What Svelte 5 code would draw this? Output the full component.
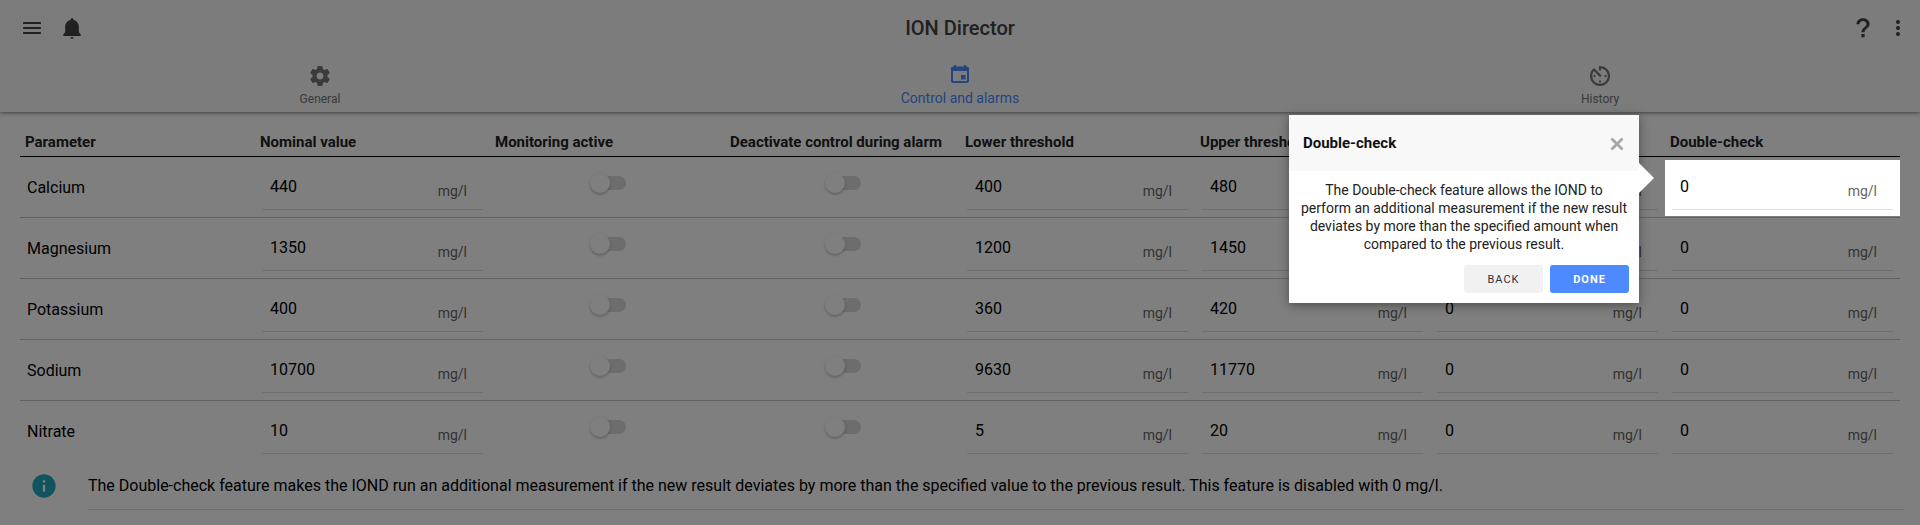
<script lang="ts">
  const columns = [
    'Parameter',
    'Nominal value',
    'Monitoring active',
    'Deactivate control during alarm',
    'Lower threshold',
    'Upper threshold',
    'Offset',
    'Double-check',
  ];

  let rows = $state([
    { name: 'Calcium', nominal: '440', monitoring: false, deactivate: false, lower: '400', upper: '480', offset: '0', check: '0' },
    { name: 'Magnesium', nominal: '1350', monitoring: false, deactivate: false, lower: '1200', upper: '1450', offset: '0', check: '0' },
    { name: 'Potassium', nominal: '400', monitoring: false, deactivate: false, lower: '360', upper: '420', offset: '0', check: '0' },
    { name: 'Sodium', nominal: '10700', monitoring: false, deactivate: false, lower: '9630', upper: '11770', offset: '0', check: '0' },
    { name: 'Nitrate', nominal: '10', monitoring: false, deactivate: false, lower: '5', upper: '20', offset: '0', check: '0' },
  ]);

  let tourOpen = $state(true);
  const closeTour = () => (tourOpen = false);
</script>

{#snippet field(row, key, label)}
  <div class="field">
    <input type="text" inputmode="numeric" aria-label="{row.name} {label}" bind:value={row[key]} />
    <span class="unit">mg/l</span>
  </div>
{/snippet}

{#snippet toggle(row, key, label)}
  <input type="checkbox" class="toggle" aria-label="{row.name} {label}" bind:checked={row[key]} />
{/snippet}

<header class="header">
  <div class="toolbar">
    <div class="actions">
      <button class="icon-button" aria-label="Menu">
        <svg viewBox="0 0 24 24">
          <rect x="3" y="6" width="18" height="2" rx=".6" />
          <rect x="3" y="11" width="18" height="2" rx=".6" />
          <rect x="3" y="16" width="18" height="2" rx=".6" />
        </svg>
      </button>
      <button class="icon-button" aria-label="Notifications">
        <svg viewBox="0 0 24 24">
          <path d="M12 2.200c-.9 0-1.500.6-1.500 1.400v.5C7.500 4.800 5.200 7.300 5.200 10.500v5.800L3.300 18.400V20h17.400v-1.600l-1.900-2.100v-5.800c0-3.200-2.300-5.700-5.300-6.400v-.5c0-.8-.6-1.400-1.500-1.400zM10.200 21.200c.2.900.9 1.500 1.800 1.500s1.600-.6 1.800-1.500z" />
        </svg>
      </button>
    </div>
    <h1>ION Director</h1>
    <div class="actions end">
      <button class="icon-button" aria-label="Help">
        <svg viewBox="0 0 24 24">
          <path d="M10.400 18h3.200v3.200h-3.200zM12 2.200c-3.700 0-6.600 2.600-6.600 6h3.100c0-1.700 1.500-3.200 3.500-3.200s3.500 1.400 3.500 3.200c0 3-5 3.300-5 8h3c0-3.500 5.100-4.100 5.100-8.200 0-3.300-2.900-5.800-6.600-5.800z" />
        </svg>
      </button>
      <button class="icon-button narrow" aria-label="More">
        <svg viewBox="0 0 24 24"><circle cx="12" cy="6" r="2" /><circle cx="12" cy="12" r="2" /><circle cx="12" cy="18" r="2" /></svg>
      </button>
    </div>
  </div>

  <nav class="tabs">
    <a class="tab" href="#general">
      <svg viewBox="0 0 24 24">
        <path d="M19.430 12.980c.04-.32.07-.64.07-.98s-.03-.66-.07-.98l2.110-1.650c.19-.15.24-.42.12-.64l-2-3.460c-.12-.22-.39-.3-.61-.22l-2.490 1c-.52-.4-1.080-.73-1.690-.98l-.38-2.650A.488.488 0 0 0 14 2h-4c-.25 0-.46.18-.49.42l-.38 2.650c-.61.25-1.170.59-1.690.98l-2.490-1c-.23-.09-.49 0-.61.22l-2 3.460c-.13.22-.07.49.12.64l2.110 1.650c-.04.32-.07.65-.07.98s.03.66.07.98l-2.110 1.650c-.19.15-.24.42-.12.64l2 3.460c.12.22.39.3.61.22l2.490-1c.52.4 1.080.73 1.690.98l.38 2.650c.03.24.24.42.49.42h4c.25 0 .46-.18.49-.42l.38-2.650c.61-.25 1.170-.59 1.690-.98l2.490 1c.23.09.49 0 .61-.22l2-3.460c.12-.22.07-.49-.12-.64l-2.110-1.650zM12 15.500c-1.930 0-3.500-1.570-3.500-3.500s1.570-3.500 3.500-3.500 3.500 1.570 3.500 3.500-1.570 3.500-3.500 3.500z" />
      </svg>
      <span>General</span>
    </a>
    <a class="tab active" href="#control" aria-current="page">
      <svg viewBox="0 0 24 24">
        <path fill-rule="evenodd" d="M6 1h2v1.500h8V1h2v1.500h1c1.100 0 2 .9 2 2V17c0 1.100-.9 2-2 2H5c-1.100 0-2-.9-2-2V4.500c0-1.100.9-2 2-2h1zM5 7v10h14V7zM13 11h4.500v4.500H13z" />
      </svg>
      <span>Control and alarms</span>
    </a>
    <a class="tab" href="#history">
      <svg viewBox="0 0 24 24">
        <path transform="translate(-1.300 -1.300) scale(1.110)" d="M11 17c0 .55.45 1 1 1s1-.45 1-1-.45-1-1-1-1 .45-1 1zm0-14v4h2V5.080c3.390.49 6 3.390 6 6.920 0 3.870-3.130 7-7 7s-7-3.130-7-7c0-1.680.59-3.220 1.580-4.420L12 13l1.410-1.410-6.800-6.800v.02C4.420 6.450 3 9.050 3 12c0 4.970 4.020 9 9 9 4.970 0 9-4.030 9-9s-4.030-9-9-9h-1zm7 9c0-.55-.45-1-1-1s-1 .45-1 1 .45 1 1 1 1-.45 1-1zM6 12c0 .55.45 1 1 1s1-.45 1-1-.45-1-1-1-1 .45-1 1z" />
      </svg>
      <span>History</span>
    </a>
  </nav>
</header>

<main>
  <table>
    <thead>
      <tr>
        {#each columns as column}
          <th scope="col">{column}</th>
        {/each}
      </tr>
    </thead>
    <tbody>
      {#each rows as row, index}
        <tr>
          <td><span class="name">{row.name}</span></td>
          <td>{@render field(row, 'nominal', 'nominal value')}</td>
          <td>{@render toggle(row, 'monitoring', 'monitoring active')}</td>
          <td>{@render toggle(row, 'deactivate', 'deactivate control during alarm')}</td>
          <td>{@render field(row, 'lower', 'lower threshold')}</td>
          <td>{@render field(row, 'upper', 'upper threshold')}</td>
          <td>{@render field(row, 'offset', 'offset')}</td>
          <td>
            {#if index === 0 && tourOpen}
              <div class="spotlight">
                {@render field(row, 'check', 'double-check')}
                <div class="tour" role="dialog" aria-labelledby="tour-title">
                  <div class="tour-header">
                    <h2 id="tour-title">Double-check</h2>
                    <button class="close" aria-label="Close" onclick={closeTour}>
                      <svg viewBox="0 0 14 14"><path d="M1.500 1.500l11 11M12.500 1.500l-11 11" /></svg>
                    </button>
                  </div>
                  <p>
                    The Double-check feature allows the IOND to perform an additional measurement if the new
                    result deviates by more than the specified amount when compared to the previous result.
                  </p>
                  <div class="tour-footer">
                    <button class="tour-button">BACK</button>
                    <button class="tour-button primary" onclick={closeTour}>DONE</button>
                  </div>
                </div>
              </div>
            {:else}
              {@render field(row, 'check', 'double-check')}
            {/if}
          </td>
        </tr>
      {/each}
    </tbody>
  </table>

  <div class="info">
    <svg viewBox="0 0 24 24">
      <path d="M12 2C6.480 2 2 6.480 2 12s4.480 10 10 10 10-4.480 10-10S17.520 2 12 2zm1 15h-2v-6h2v6zm0-8h-2V7h2v2z" />
    </svg>
    <p>
      The Double-check feature makes the IOND run an additional measurement if the new result deviates by more
      than the specified value to the previous result. This feature is disabled with 0 mg/l.
    </p>
  </div>
</main>

<style>
  :global(body) {
    background: #fff;
    color: #000;
    font-family: Roboto, 'Helvetica Neue', sans-serif;
    font-size: 16px;
    overflow: hidden;
  }

  button,
  input {
    font-family: inherit;
  }

  svg {
    display: block;
    fill: currentColor;
  }

  .header {
    background: #f8f8f8;
    box-shadow: 0 1px 4px rgba(0, 0, 0, 0.5);
  }

  .toolbar {
    display: grid;
    grid-template-columns: 1fr auto 1fr;
    align-items: center;
    height: 56px;
    padding: 0 12px;
    color: #424242;
  }

  h1 {
    margin: 0;
    font-size: 20px;
    font-weight: 500;
  }

  .actions {
    display: flex;
  }

  .actions.end {
    justify-content: flex-end;
  }

  .icon-button {
    display: flex;
    align-items: center;
    justify-content: center;
    width: 40px;
    height: 40px;
    padding: 0;
    border: 0;
    background: none;
    color: inherit;
    cursor: pointer;
  }

  .icon-button.narrow {
    width: 20px;
    margin: 0 0 0 5px;
  }

  .icon-button svg {
    width: 24px;
    height: 24px;
    flex-shrink: 0;
  }

  .tabs {
    display: grid;
    grid-template-columns: repeat(3, 1fr);
    height: 56px;
  }

  .tab {
    display: flex;
    flex-direction: column;
    align-items: center;
    justify-content: flex-end;
    gap: 4px;
    padding-bottom: 6px;
    font-size: 12px;
    line-height: 14px;
    color: #747474;
    text-decoration: none;
  }

  .tab svg {
    width: 24px;
    height: 24px;
  }

  .tab.active {
    gap: 2px;
    font-size: 14px;
    line-height: 16px;
    color: #488aff;
  }

  main {
    padding: 1px 16px 15px 20px;
  }

  table {
    width: calc(100% - 4px);
    table-layout: fixed;
    border-collapse: separate;
    border-spacing: 0;
  }

  th {
    height: 44px;
    padding: 14px 0 0 5px;
    box-sizing: border-box;
    border-bottom: 1px solid #000;
    color: #222;
    font-size: 15px;
    font-weight: 700;
    text-align: left;
    white-space: nowrap;
  }

  td {
    height: 61px;
    padding: 3px 0 1px;
    box-sizing: border-box;
    border-bottom: 1px solid #c4c4c4;
    vertical-align: top;
  }

  tbody tr:last-child td {
    border-bottom-color: transparent;
  }

  .name {
    display: block;
    padding-left: 7px;
    line-height: 56px;
  }

  .field {
    display: flex;
    height: 50px;
    margin: 0 7px 6px;
    box-sizing: border-box;
    border-bottom: 1px solid #dedede;
  }

  .field input {
    flex: 1;
    min-width: 0;
    padding: 17px 8px 13px;
    border: 0;
    outline: none;
    background: none;
    color: #000;
    font-size: 16px;
    line-height: 19px;
  }

  .unit {
    padding: 23px 16px 0 0;
    color: #666;
    font-size: 14px;
    line-height: 16px;
  }

  .toggle {
    appearance: none;
    display: flex;
    align-items: center;
    width: 36px;
    height: 14px;
    margin: 16px auto 0;
    border-radius: 7px;
    background: #dadada;
    cursor: pointer;
  }

  .toggle::before {
    content: '';
    width: 20px;
    height: 20px;
    flex-shrink: 0;
    border-radius: 50%;
    background: #fff;
    box-shadow: 0 2px 2px rgba(0, 0, 0, 0.14), 0 1px 4px rgba(0, 0, 0, 0.1);
    transition: transform 0.3s;
  }

  .toggle:checked::before {
    background: #488aff;
    transform: translateX(16px);
  }

  /* the spread shadow dims everything around the highlighted cell */
  .spotlight {
    position: relative;
    z-index: 10;
    display: flow-root;
    background: #fff;
    box-shadow: 0 0 0 9999px rgba(0, 0, 0, 0.5);
  }

  .tour {
    position: absolute;
    top: -45px;
    right: calc(100% + 26px);
    width: 350px;
    background: #fff;
    box-shadow: 0 2px 10px rgba(0, 0, 0, 0.4);
  }

  .tour::after {
    content: '';
    position: absolute;
    top: 48px;
    left: 100%;
    border: 15px solid transparent;
    border-left-color: #fff;
    border-right-width: 0;
  }

  .tour-header {
    display: flex;
    align-items: center;
    justify-content: space-between;
    height: 56px;
    padding: 0 15px 0 14px;
    background: #f8f8f8;
  }

  h2 {
    margin: 0;
    font-size: 15px;
    font-weight: 700;
    color: #111;
  }

  .close {
    padding: 2px 0 0;
    border: 0;
    background: none;
    color: #a8a8a8;
    cursor: pointer;
  }

  .close svg {
    width: 14px;
    height: 14px;
    stroke: currentColor;
    stroke-width: 2.8;
  }

  .tour p {
    margin: 0;
    padding: 10px 10px 0;
    color: #222;
    font-size: 14px;
    line-height: 18px;
    text-align: center;
  }

  .tour-footer {
    display: flex;
    justify-content: flex-end;
    gap: 7px;
    padding: 12px 10px 10px;
  }

  .tour-button {
    width: 79px;
    height: 28px;
    padding: 0;
    border: 0;
    border-radius: 3px;
    background: #f1f1f1;
    color: #333;
    font-size: 11px;
    letter-spacing: 1px;
    cursor: pointer;
  }

  .tour-button.primary {
    background: #4d89ff;
    color: #fff;
    font-weight: 700;
  }

  .info {
    display: flex;
    align-items: center;
  }

  .info svg {
    width: 28px;
    height: 28px;
    margin: 0 30px 0 10px;
    color: #20a8be;
  }

  .info p {
    flex: 1;
    margin: 0;
    border-bottom: 1px solid #dedede;
    line-height: 47px;
  }
</style>
